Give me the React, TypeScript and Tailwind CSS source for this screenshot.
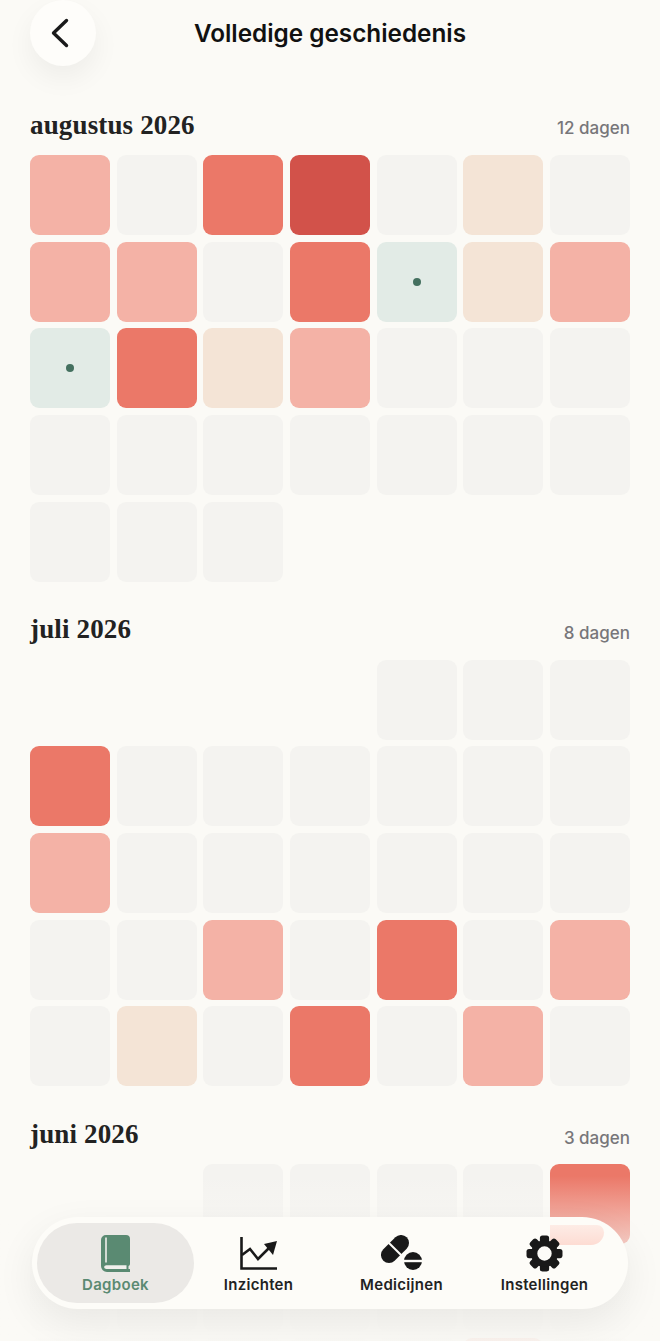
type Cell = "none" | "empty" | "light" | "mid" | "dark" | "sand" | "sage";

const cellStyles: Record<Cell, string> = {
  none: "",
  empty: "bg-[#f4f3f0]",
  light: "bg-[#f4b2a6]",
  mid: "bg-[#eb7868]",
  dark: "bg-[#d2524a]",
  sand: "bg-[#f4e4d6]",
  sage: "bg-[#e2ebe6]",
};

const months: { title: string; count: string; cells: Cell[] }[] = [
  {
    title: "augustus 2026",
    count: "12 dagen",
    cells: [
      "light", "empty", "mid", "dark", "empty", "sand", "empty",
      "light", "light", "empty", "mid", "sage", "sand", "light",
      "sage", "mid", "sand", "light", "empty", "empty", "empty",
      "empty", "empty", "empty", "empty", "empty", "empty", "empty",
      "empty", "empty", "empty",
    ],
  },
  {
    title: "juli 2026",
    count: "8 dagen",
    cells: [
      "none", "none", "none", "none", "empty", "empty", "empty",
      "mid", "empty", "empty", "empty", "empty", "empty", "empty",
      "light", "empty", "empty", "empty", "empty", "empty", "empty",
      "empty", "empty", "light", "empty", "mid", "empty", "light",
      "empty", "sand", "empty", "mid", "empty", "light", "empty",
    ],
  },
  {
    title: "juni 2026",
    count: "3 dagen",
    cells: [
      "none", "none", "empty", "empty", "empty", "empty", "mid",
      "empty", "empty", "empty", "empty", "empty", "empty", "empty",
      "empty", "empty", "empty", "empty", "empty", "light", "empty",
    ],
  },
];

function BackIcon() {
  return (
    <svg width="20" height="30" viewBox="0 0 20 30" fill="none">
      <path
        d="M16.500 2.500 3.500 15l13 12.500"
        stroke="#1a1a1a"
        strokeWidth="3.400"
        strokeLinecap="round"
        strokeLinejoin="round"
      />
    </svg>
  );
}

function BookIcon() {
  return (
    <svg width="30" height="37" viewBox="0 0 30 37" fill="none">
      <path
        d="M5 0h20a4 4 0 0 1 4 4v25a2 2 0 0 1-1.500 2v3H29v3H6a6 6 0 0 1-6-6V5a5 5 0 0 1 5-5Z"
        fill="#5a8a72"
      />
      <path d="M5 2.500v25" stroke="#f0efec" strokeWidth="1.600" />
      <path d="M3 32a2.500 2.500 0 0 1 2.500-1.800H25.500v3.800H5.500A2.500 2.500 0 0 1 3 32Z" fill="#f0efec" />
    </svg>
  );
}

function ChartIcon() {
  return (
    <svg width="38" height="33" viewBox="0 0 38 33" fill="none">
      <path d="M1.500 0v31.500H37" stroke="#191919" strokeWidth="2.600" />
      <path d="M2 18l8-6 8 10 12-12" stroke="#191919" strokeWidth="2.600" />
      <path d="M24 7l13-3-4 14Z" fill="#191919" />
    </svg>
  );
}

function PillsIcon() {
  return (
    <svg width="42" height="36" viewBox="0 0 42 36" fill="none">
      <g transform="rotate(-45 14 14)">
        <rect x="-2.500" y="6" width="33" height="16" rx="8" fill="#191919" />
        <rect x="13" y="4" width="2" height="20" fill="#fdfcf8" />
      </g>
      <circle cx="32" cy="26" r="9" fill="#191919" />
      <rect x="21" y="24.800" width="22" height="2.400" fill="#fdfcf8" />
    </svg>
  );
}

function GearIcon() {
  const teeth = [0, 45, 90, 135, 180, 225, 270, 315];
  return (
    <svg width="37" height="37" viewBox="0 0 36 36">
      {teeth.map((deg) => (
        <rect
          key={deg}
          x="13.500"
          y="0.500"
          width="9"
          height="9"
          rx="2.500"
          fill="#191919"
          transform={`rotate(${deg} 18 18)`}
        />
      ))}
      <circle cx="18" cy="18" r="10" fill="none" stroke="#191919" strokeWidth="6" />
    </svg>
  );
}

const tabs = [
  { label: "Dagboek", icon: <BookIcon />, className: "rounded-[40px] bg-[#ebe9e6] text-[#5a8a72]" },
  { label: "Inzichten", icon: <ChartIcon />, className: "ml-[-14px] text-[#222]" },
  { label: "Medicijnen", icon: <PillsIcon />, className: "ml-[-14px] text-[#222]" },
  { label: "Instellingen", icon: <GearIcon />, className: "ml-[-14px] text-[#222]" },
];

export default function App() {
  return (
    <div className="relative h-[1341px] overflow-hidden bg-[#fbfaf6] font-['Inter',sans-serif]">
      <header className="relative flex h-[66px] items-center justify-center px-[30px] pt-[1px]">
        <button className="absolute left-[30px] top-0 flex h-[66px] w-[66px] items-center justify-center rounded-full bg-[#fefdfa] pr-[6px] shadow-[0_12px_28px_rgba(0,0,0,0.055)]">
          <BackIcon />
        </button>
        <h1 className="text-[24.3px] font-semibold text-[#111]">Volledige geschiedenis</h1>
      </header>

      <main className="flex flex-col gap-[31px] px-[30px] pt-[42px]">
        {months.map((month) => (
          <section key={month.title}>
            <div className="mb-[13px] flex h-[34px] items-center justify-between">
              <h2 className="font-['Liberation_Serif',serif] text-[27px] font-bold tracking-[0.15px] text-[#222]">
                {month.title}
              </h2>
              <span className="mt-[8px] text-[17px] font-medium text-[#77767a]">{month.count}</span>
            </div>
            <div className="grid grid-cols-7 gap-[6.67px]">
              {month.cells.map((cell, i) => (
                <div
                  key={i}
                  className={`flex aspect-square items-center justify-center rounded-[9px] ${cellStyles[cell]}`}
                >
                  {cell === "sage" && <span className="h-[8px] w-[8px] rounded-full bg-[#44705f]" />}
                </div>
              ))}
            </div>
          </section>
        ))}
      </main>

      <div className="absolute inset-x-0 bottom-0 h-[165px] bg-gradient-to-b from-[#fbfaf6]/0 via-[#fbfaf6]/70 via-[45%] to-[#fbfaf6]/90" />

      <nav className="absolute bottom-[32px] left-[32px] flex h-[92px] w-[596px] items-center rounded-[46px] bg-[#fdfcf8] p-[5px] shadow-[0_14px_40px_rgba(0,0,0,0.07)]">
        <div className="absolute left-[518px] top-[8px] h-[20px] w-[54px] rounded-br-[18px] rounded-tr-[10px] bg-gradient-to-b from-[#fdece6] to-[#fddcd3]" />
        {tabs.map((tab) => (
          <div
            key={tab.label}
            className={`relative flex h-[80px] w-[157px] shrink-0 flex-col items-center justify-end pb-[9px] ${tab.className}`}
          >
            <div className="mb-[4px] flex h-[38px] items-center">{tab.icon}</div>
            <span className="text-[15px] font-semibold leading-[18px] tracking-[0.3px]">{tab.label}</span>
          </div>
        ))}
      </nav>
    </div>
  );
}
